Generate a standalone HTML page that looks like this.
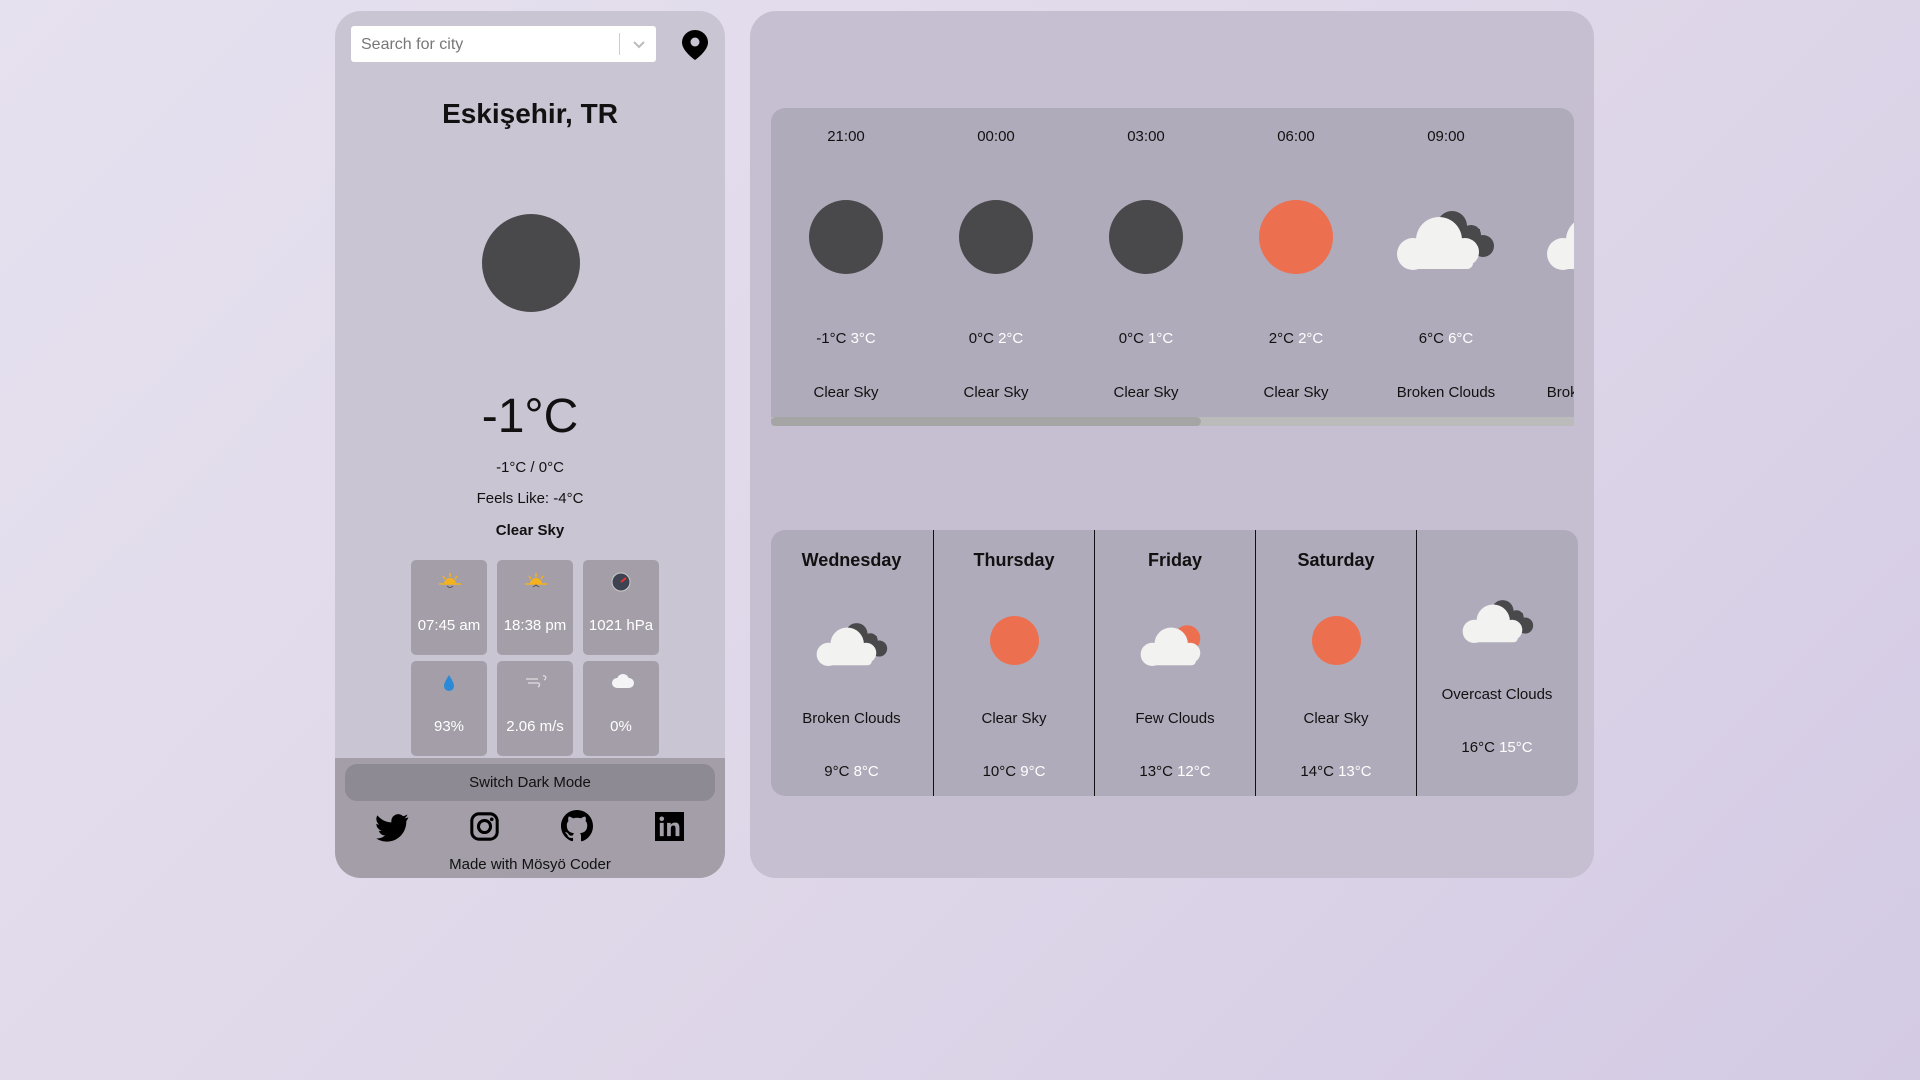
<!DOCTYPE html>
<html><head><meta charset="utf-8"><style>
*{box-sizing:border-box;margin:0;padding:0}
body{width:1920px;height:1080px;overflow:hidden;background:linear-gradient(135deg,#e6e1ef 0%,#ddd6e8 60%,#d3cae4 100%);font-family:"Liberation Sans",sans-serif;color:#111;position:relative}
.abs{position:absolute}
.c{text-align:center}
#left{left:335px;top:11px;width:390px;height:867px;background:#cac5d3;border-radius:26px;overflow:hidden}
#right{left:750px;top:11px;width:844px;height:867px;background:#c6bfd1;border-radius:26px}
.tile{position:absolute;width:76px;height:95px;background:#a39ea8;border-radius:5px;color:#fff;font-size:15px;text-align:center}
.tile .t{position:absolute;left:0;right:0;top:57px}
.tile svg{position:absolute;left:28px;top:12px}
.hp{position:absolute;left:771px;top:108px;width:803px;height:318px;background:#b0abba;border-radius:14px 14px 0 0;overflow:hidden}
.hc{position:absolute;width:150px;text-align:center;font-size:15px}
.w{color:#fff}
.dp{position:absolute;left:771px;top:530px;width:807px;height:266px;background:#b0abba;border-radius:14px;overflow:hidden}
.dc{position:absolute;top:0;height:266px;width:161px;text-align:center;font-size:15px}
.dc b{position:absolute;left:0;right:0;top:20px;font-size:18px}
</style></head><body>
<svg width="0" height="0" style="position:absolute"><defs>
<g id="cl">
<circle cx="57" cy="22" r="15" fill="#49484b"/><circle cx="76" cy="31" r="10" fill="#49484b"/><circle cx="88" cy="42" r="11" fill="#49484b"/><rect x="55" y="25" width="30" height="25" fill="#49484b"/>
<circle cx="44" cy="36" r="23" fill="#f2f2f0"/><circle cx="70" cy="48" r="14" fill="#f2f2f0"/><circle cx="18" cy="50" r="16" fill="#f2f2f0"/><rect x="18" y="46" width="60" height="19" rx="6" fill="#f2f2f0"/>
</g>
<g id="fc">
<circle cx="66" cy="28" r="18" fill="#ec6f4f"/>
<circle cx="44" cy="36" r="23" fill="#f2f2f0"/><circle cx="70" cy="48" r="14" fill="#f2f2f0"/><circle cx="18" cy="50" r="16" fill="#f2f2f0"/><rect x="18" y="46" width="60" height="19" rx="6" fill="#f2f2f0"/>
</g>
</defs></svg>

<div id="left" class="abs">
 <div class="abs" style="left:16px;top:15px;width:305px;height:36px;background:#fff;border-radius:3px"></div>
 <div class="abs" style="left:26px;top:25px;font-size:16px;color:#777">Search for city</div>
 <div class="abs" style="left:284px;top:22px;width:1px;height:22px;background:#ccc"></div>
 <svg class="abs" style="left:297px;top:29px" width="14" height="9" viewBox="0 0 14 9"><path d="M2 2l5 5 5-5" stroke="#bbb" stroke-width="2" fill="none"/></svg>
 <svg class="abs" style="left:346px;top:18px" width="28" height="32" viewBox="0 0 28 32"><path d="M14 1C7 1 1 6.5 1 13.5 1 22 14 31 14 31S27 22 27 13.5C27 6.5 21 1 14 1z" fill="#000"/><circle cx="14" cy="13" r="4.5" fill="#cac5d3"/></svg>
 <div class="abs c" style="left:0;right:0;top:87px;font-size:28px;font-weight:bold">Eskişehir, TR</div>
 <div class="abs" style="left:147px;top:203px;width:98px;height:98px;border-radius:50%;background:#49484b"></div>
 <div class="abs c" style="left:0;right:0;top:378px;font-size:48px">-1°C</div>
 <div class="abs c" style="left:0;right:0;top:448px;font-size:15px">-1°C / 0°C</div>
 <div class="abs c" style="left:0;right:0;top:479px;font-size:15px">Feels Like: -4°C</div>
 <div class="abs c" style="left:0;right:0;top:511px;font-size:15px;font-weight:bold">Clear Sky</div>

 <div class="tile" style="left:76px;top:549px"><svg width="22" height="16" viewBox="0 0 22 16"><path d="M5 12a6 6 0 0 1 12 0z" fill="#f5b21d"/><path d="M0 12h22M11 1v4M4 4l2 3M18 4l-2 3" stroke="#f5b21d" stroke-width="1.5"/><path d="M8 14l3 2 3-2" stroke="#555" fill="none"/></svg><div class="t">07:45 am</div></div>
 <div class="tile" style="left:162px;top:549px"><svg width="22" height="16" viewBox="0 0 22 16"><path d="M5 12a6 6 0 0 1 12 0z" fill="#f5b21d"/><path d="M0 12h22M11 1v4M4 4l2 3M18 4l-2 3" stroke="#f5b21d" stroke-width="1.5"/><path d="M8 15l3-2 3 2" stroke="#555" fill="none"/></svg><div class="t">18:38 pm</div></div>
 <div class="tile" style="left:248px;top:549px"><svg width="20" height="20" viewBox="0 0 20 20"><circle cx="10" cy="10" r="9" fill="#3d4350" stroke="#ccc"/><path d="M10 10l5-4" stroke="#e33" stroke-width="2"/></svg><div class="t">1021 hPa</div></div>
 <div class="tile" style="left:76px;top:650px"><svg width="20" height="20" viewBox="0 0 20 20"><path d="M10 2C7 7 5 10 5 13a5 5 0 0 0 10 0c0-3-2-6-5-11z" fill="#2a8ad8"/></svg><div class="t">93%</div></div>
 <div class="tile" style="left:162px;top:650px"><svg width="24" height="18" viewBox="0 0 24 18"><path d="M1 6h12M3 10h10c2 0 2 3 0 4M18 3c3-1 4 3 1 4" stroke="#ddd" stroke-width="1.3" fill="none"/></svg><div class="t">2.06 m/s</div></div>
 <div class="tile" style="left:248px;top:650px"><svg width="24" height="16" viewBox="0 0 24 16"><circle cx="12" cy="7" r="6" fill="#f4f4f6"/><circle cx="6" cy="10" r="5" fill="#f4f4f6"/><circle cx="18" cy="10" r="5" fill="#f4f4f6"/><rect x="6" y="9" width="12" height="6" fill="#f4f4f6"/></svg><div class="t">0%</div></div>

 <div class="abs" style="left:0;top:747px;width:390px;height:120px;background:#a39ea8"></div>
 <div class="abs c" style="left:10px;top:753px;width:370px;height:37px;background:#8e8a94;border-radius:12px;font-size:15px;line-height:37px">Switch Dark Mode</div>
 <svg class="abs" style="left:41px;top:803px" width="34" height="28" viewBox="0 0 24 20"><path d="M23 2.3a9.6 9.6 0 0 1-2.8.8 4.9 4.9 0 0 0 2.1-2.7 9.8 9.8 0 0 1-3.1 1.2A4.9 4.9 0 0 0 10.9 6 14 14 0 0 1 .8 1a4.9 4.9 0 0 0 1.5 6.6A4.9 4.9 0 0 1 .1 7v.1a4.9 4.9 0 0 0 3.9 4.8 4.9 4.9 0 0 1-2.2.1 4.9 4.9 0 0 0 4.6 3.4A9.9 9.9 0 0 1 0 17.5 14 14 0 0 0 7.5 19.7c9 0 14-7.5 14-14v-.6A10 10 0 0 0 23 2.3z" fill="#000"/></svg>
 <svg class="abs" style="left:135px;top:801px" width="29" height="29" viewBox="0 0 24 24"><rect x="1.5" y="1.5" width="21" height="21" rx="6" fill="none" stroke="#000" stroke-width="2.5"/><circle cx="12" cy="12" r="5" fill="none" stroke="#000" stroke-width="2.5"/><circle cx="18" cy="6" r="1.5"/></svg>
 <svg class="abs" style="left:226px;top:799px" width="32" height="32" viewBox="0 0 16 16"><path d="M8 0C3.58 0 0 3.58 0 8c0 3.54 2.29 6.53 5.47 7.59.4.07.55-.17.55-.38v-1.33c-2.23.48-2.7-1.07-2.7-1.07-.36-.92-.89-1.170-.89-1.17-.73-.5.05-.49.05-.49.8.06 1.23.83 1.23.83.72 1.22 1.87.87 2.33.66.07-.52.28-.87.51-1.07-1.78-.2-3.640-.89-3.64-3.95 0-.87.31-1.59.82-2.15-.08-.2-.36-1.02.08-2.12 0 0 .67-.21 2.2.82a7.6 7.6 0 0 1 4 0c1.53-1.04 2.2-.82 2.2-.82.44 1.1.16 1.92.08 2.12.51.56.82 1.27.82 2.15 0 3.07-1.87 3.75-3.65 3.95.29.25.54.73.54 1.48v2.2c0 .21.15.46.55.38A8 8 0 0 0 16 8c0-4.42-3.58-8-8-8z"/></svg>
 <svg class="abs" style="left:320px;top:801px" width="29" height="29" viewBox="0 0 24 24"><rect width="24" height="24" fill="#000"/><rect x="4" y="9" width="3.2" height="11" fill="#a39ea8"/><circle cx="5.6" cy="5.6" r="1.9" fill="#a39ea8"/><path d="M10 9h3v1.6c.6-1 1.8-1.9 3.6-1.9 3 0 3.6 2 3.6 4.6V20h-3.2v-5.8c0-1.4 0-3-1.8-3s-2.1 1.4-2.1 2.9V20H10z" fill="#a39ea8"/></svg>
 <div class="abs c" style="left:0;right:0;top:845px;font-size:15px">Made with Mösyö Coder</div>
</div>

<div id="right" class="abs"></div>
<div class="hp">
 <div class="hc" style="left:0;top:20px">21:00</div><div class="hc" style="left:150px;top:20px">00:00</div><div class="hc" style="left:300px;top:20px">03:00</div><div class="hc" style="left:450px;top:20px">06:00</div><div class="hc" style="left:600px;top:20px">09:00</div>
 <div class="abs" style="left:38px;top:92px;width:74px;height:74px;border-radius:50%;background:#49484b"></div>
 <div class="abs" style="left:188px;top:92px;width:74px;height:74px;border-radius:50%;background:#49484b"></div>
 <div class="abs" style="left:338px;top:92px;width:74px;height:74px;border-radius:50%;background:#49484b"></div>
 <div class="abs" style="left:488px;top:92px;width:74px;height:74px;border-radius:50%;background:#ec6f4f"></div>
 <svg class="abs" style="left:624px;top:96px" width="104" height="66" viewBox="0 0 104 66"><use href="#cl"/></svg>
 <svg class="abs" style="left:774px;top:96px" width="104" height="66" viewBox="0 0 104 66"><use href="#cl"/></svg>
 <div class="hc" style="left:0;top:222px">-1°C <span class="w">3°C</span></div><div class="hc" style="left:150px;top:222px">0°C <span class="w">2°C</span></div><div class="hc" style="left:300px;top:222px">0°C <span class="w">1°C</span></div><div class="hc" style="left:450px;top:222px">2°C <span class="w">2°C</span></div><div class="hc" style="left:600px;top:222px">6°C <span class="w">6°C</span></div><div class="hc" style="left:750px;top:222px">9°C</div>
 <div class="hc" style="left:0;top:276px">Clear Sky</div><div class="hc" style="left:150px;top:276px">Clear Sky</div><div class="hc" style="left:300px;top:276px">Clear Sky</div><div class="hc" style="left:450px;top:276px">Clear Sky</div><div class="hc" style="left:600px;top:276px">Broken Clouds</div><div class="hc" style="left:750px;top:276px">Broken Clouds</div>
 <div class="abs" style="left:0;top:309px;width:803px;height:9px;background:#bbb"></div>
 <div class="abs" style="left:0;top:309px;width:430px;height:9px;background:#a5a5a5;border-radius:5px"></div>
</div>
<div class="dp">
 <div class="dc" style="left:0"><b>Wednesday</b><svg class="abs" style="left:44px;top:88px" width="76" height="48" viewBox="0 0 104 66"><use href="#cl"/></svg><div class="abs" style="left:0;right:0;top:180px">Broken Clouds</div><div class="abs" style="left:0;right:0;top:233px">9°C <span class="w">8°C</span></div></div>
 <div class="dc" style="left:162px;border-left:1.5px solid #111"><b>Thursday</b><div class="abs" style="left:56px;top:86px;width:49px;height:49px;border-radius:50%;background:#ec6f4f"></div><div class="abs" style="left:0;right:0;top:180px">Clear Sky</div><div class="abs" style="left:0;right:0;top:233px">10°C <span class="w">9°C</span></div></div>
 <div class="dc" style="left:323px;border-left:1.5px solid #111"><b>Friday</b><svg class="abs" style="left:44px;top:88px" width="76" height="48" viewBox="0 0 104 66"><use href="#fc"/></svg><div class="abs" style="left:0;right:0;top:180px">Few Clouds</div><div class="abs" style="left:0;right:0;top:233px">13°C <span class="w">12°C</span></div></div>
 <div class="dc" style="left:484px;border-left:1.5px solid #111"><b>Saturday</b><div class="abs" style="left:56px;top:86px;width:49px;height:49px;border-radius:50%;background:#ec6f4f"></div><div class="abs" style="left:0;right:0;top:180px">Clear Sky</div><div class="abs" style="left:0;right:0;top:233px">14°C <span class="w">13°C</span></div></div>
 <div class="dc" style="left:645px;border-left:1.5px solid #111"><svg class="abs" style="left:44px;top:65px" width="76" height="48" viewBox="0 0 104 66"><use href="#cl"/></svg><div class="abs" style="left:0;right:0;top:156px">Overcast Clouds</div><div class="abs" style="left:0;right:0;top:209px">16°C <span class="w">15°C</span></div></div>
</div>
</body></html>
